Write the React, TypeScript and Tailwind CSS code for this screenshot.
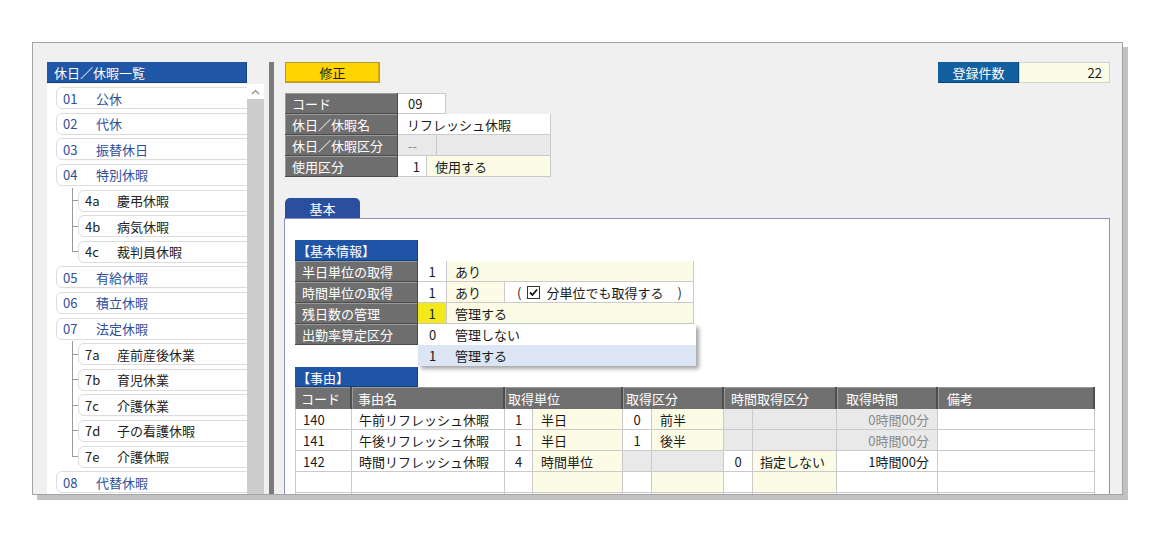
import React from "react";

type Sub = [string, string];
type Holiday = { code: string; name: string; children?: Sub[] };

const holidays: Holiday[] = [
  { code: "01", name: "公休" },
  { code: "02", name: "代休" },
  { code: "03", name: "振替休日" },
  {
    code: "04",
    name: "特別休暇",
    children: [
      ["4a", "慶弔休暇"],
      ["4b", "病気休暇"],
      ["4c", "裁判員休暇"],
    ],
  },
  { code: "05", name: "有給休暇" },
  { code: "06", name: "積立休暇" },
  {
    code: "07",
    name: "法定休暇",
    children: [
      ["7a", "産前産後休業"],
      ["7b", "育児休業"],
      ["7c", "介護休業"],
      ["7d", "子の看護休暇"],
      ["7e", "介護休暇"],
    ],
  },
  { code: "08", name: "代替休暇" },
];

type Reason = {
  code: string;
  name: string;
  unitNo: string;
  unit: string;
  kbnNo?: string;
  kbn?: string;
  timeNo?: string;
  time?: string;
  hours: string;
  auto: boolean;
};

const reasons: Reason[] = [
  { code: "140", name: "午前リフレッシュ休暇", unitNo: "1", unit: "半日", kbnNo: "0", kbn: "前半", hours: "0時間00分", auto: true },
  { code: "141", name: "午後リフレッシュ休暇", unitNo: "1", unit: "半日", kbnNo: "1", kbn: "後半", hours: "0時間00分", auto: true },
  { code: "142", name: "時間リフレッシュ休暇", unitNo: "4", unit: "時間単位", timeNo: "0", time: "指定しない", hours: "1時間00分", auto: false },
];

const label =
  "flex shrink-0 items-center bg-[#6e6e6e] text-white border-b border-r border-[#4c4c4c] shadow-[inset_1px_1px_0_#999999]";
const cell = "flex shrink-0 items-center border-b border-r border-[#cacaca]";
const yellow = "bg-[#fcfce6]";
const gray = "bg-[#e9e9e9]";

function TopItem({ code, name }: { code: string; name: string }) {
  return (
    <div className="flex h-[25.6px] shrink-0 items-center pl-[9px]">
      <div className="flex h-[22px] w-[230px] shrink-0 items-center rounded-[6px] border border-[#dcdcdc] bg-white pl-[6px] text-[#2d4f9c]">
        <span className="w-[33px] shrink-0">{code}</span>
        <span>{name}</span>
      </div>
    </div>
  );
}

function SubItem({ code, name, last }: { code: string; name: string; last: boolean }) {
  return (
    <div className="flex h-[25.6px] shrink-0 pl-[25px]">
      <div className="flex w-[6px] shrink-0 flex-col">
        <div className="flex-1 border-b border-l border-[#9a9a9a]" />
        <div className={last ? "flex-1" : "flex-1 border-l border-[#9a9a9a]"} />
      </div>
      <div className="flex shrink-0 items-center">
        <div className="flex h-[22px] w-[220px] shrink-0 items-center rounded-[6px] border border-[#dcdcdc] bg-white pl-[6px] text-[#222]">
          <span className="w-[32px] shrink-0">{code}</span>
          <span>{name}</span>
        </div>
      </div>
    </div>
  );
}

function LeftPanel() {
  return (
    <div className="flex w-[217px] shrink-0 flex-col">
      <div className="flex h-[21px] w-[200px] shrink-0 items-center bg-[#1f56a6] pl-[7px] text-white shadow-[inset_-1px_-1px_0_#123f80]">
        休日／休暇一覧
      </div>
      <div className="mt-px flex min-h-0 flex-1">
        <div className="flex w-[200px] shrink-0 flex-col overflow-hidden bg-white pt-[1.4px]">
          {holidays.map((h) => (
            <React.Fragment key={h.code}>
              <TopItem code={h.code} name={h.name} />
              {h.children?.map(([c, n], i) => (
                <SubItem key={c} code={c} name={n} last={i === h.children!.length - 1} />
              ))}
            </React.Fragment>
          ))}
        </div>
        <div className="flex w-[17px] shrink-0 flex-col">
          <div className="flex h-[15px] shrink-0 items-center justify-center bg-white">
            <svg width="9" height="6" viewBox="0 0 9 6">
              <path d="M1 5 L4.5 1.5 L8 5" fill="none" stroke="#8a8a8a" strokeWidth="1.2" />
            </svg>
          </div>
          <div className="flex-1 bg-[#cdcdcd]" />
        </div>
      </div>
    </div>
  );
}

function Checkbox() {
  return (
    <span className="mx-[6px] inline-flex h-[13px] w-[13px] shrink-0 items-center justify-center border border-[#333] bg-white">
      <svg width="11" height="11" viewBox="0 0 11 11">
        <path d="M2 5.5 L4.5 8 L9 2.5" fill="none" stroke="#111" strokeWidth="1.8" />
      </svg>
    </span>
  );
}

function BasicInfo() {
  return (
    <div className="flex shrink-0 flex-col">
      <div className="flex h-[21px] w-[123px] shrink-0 items-center bg-[#1f55a7] pl-[2px] text-white shadow-[inset_-1px_-1px_0_#123f80]">
        【基本情報】
      </div>
      <div className="flex h-[21px] shrink-0">
        <div className={`${label} w-[123px] pl-[7px]`}>半日単位の取得</div>
        <div className={`${cell} w-[29px] justify-center bg-white`}>1</div>
        <div className={`${cell} ${yellow} w-[247px] pl-[8px]`}>あり</div>
      </div>
      <div className="flex h-[21px] shrink-0">
        <div className={`${label} w-[123px] pl-[7px]`}>時間単位の取得</div>
        <div className={`${cell} w-[29px] justify-center bg-white`}>1</div>
        <div className={`${cell} ${yellow} w-[58px] pl-[8px]`}>あり</div>
        <div className={`${cell} w-[189px] bg-white pl-[12px]`}>
          <span>(</span>
          <Checkbox />
          <span>分単位でも取得する</span>
          <span className="ml-[14px]">)</span>
        </div>
      </div>
      <div className="relative flex h-[21px] shrink-0">
        <div className={`${label} w-[123px] pl-[7px]`}>残日数の管理</div>
        <div className={`${cell} w-[29px] justify-center bg-[#f3e81a]`}>1</div>
        <div className={`${cell} ${yellow} w-[247px] pl-[8px]`}>管理する</div>
        <div className="absolute left-[123px] top-[21px] z-10 flex w-[278px] flex-col bg-white shadow-[3px_3px_4px_rgba(0,0,0,0.35)]">
          <div className="flex h-[21px] items-center">
            <span className="w-[29px] text-center">0</span>
            <span className="pl-[8px]">管理しない</span>
          </div>
          <div className="flex h-[21px] items-center bg-[#dbe5f3]">
            <span className="w-[29px] text-center">1</span>
            <span className="pl-[8px]">管理する</span>
          </div>
        </div>
      </div>
      <div className="flex h-[21px] shrink-0">
        <div className={`${label} w-[123px] pl-[7px]`}>出勤率算定区分</div>
        <div className={`${cell} w-[29px] bg-white`} />
        <div className={`${cell} ${yellow} w-[247px]`} />
      </div>
    </div>
  );
}

const th =
  "flex shrink-0 items-center bg-[#707070] text-white border-r-2 border-[#4d4d4d] shadow-[inset_1px_1px_0_#9a9a9a]";

function ReasonTable() {
  const empty: Reason = { code: "", name: "", unitNo: "", unit: "", hours: "", auto: false };
  const rows = [...reasons, empty, empty];
  return (
    <div className="flex shrink-0 flex-col">
      <div className="flex h-[20px] w-[123px] shrink-0 items-center bg-[#1f55a7] pl-[2px] text-white shadow-[inset_-1px_-1px_0_#123f80]">
        【事由】
      </div>
      <div className="flex h-[22px] w-[800px] shrink-0">
        <div className={`${th} w-[57px] pl-[6px]`}>コード</div>
        <div className={`${th} w-[153px] pl-[6px]`}>事由名</div>
        <div className={`${th} w-[118px] pl-[3px]`}>取得単位</div>
        <div className={`${th} w-[101px] pl-[3px]`}>取得区分</div>
        <div className={`${th} w-[113px] pl-[7px]`}>時間取得区分</div>
        <div className={`${th} w-[101px] pl-[9px]`}>取得時間</div>
        <div className={`${th} w-[157px] pl-[9px]`}>備考</div>
      </div>
      {rows.map((r, i) => {
        const kbnOff = r.code !== "" && r.kbnNo === undefined;
        const timeOff = r.code !== "" && r.timeNo === undefined;
        return (
          <div key={i} className="flex h-[21px] w-[800px] shrink-0">
            <div className={`${cell} w-[57px] border-l bg-white pl-[7px]`}>{r.code}</div>
            <div className={`${cell} w-[153px] bg-white pl-[7px]`}>{r.name}</div>
            <div className={`${cell} w-[28px] justify-center bg-white`}>{r.unitNo}</div>
            <div className={`${cell} ${yellow} w-[90px] pl-[8px]`}>{r.unit}</div>
            <div className={`${cell} ${kbnOff ? gray : "bg-white"} w-[29px] justify-center`}>{r.kbnNo}</div>
            <div className={`${cell} ${kbnOff ? gray : yellow} w-[72px] pl-[8px]`}>{r.kbn}</div>
            <div className={`${cell} ${timeOff ? gray : "bg-white"} w-[29px] justify-center`}>{r.timeNo}</div>
            <div className={`${cell} ${timeOff ? gray : yellow} w-[84px] pl-[7px]`}>{r.time}</div>
            <div
              className={`${cell} ${r.auto ? "bg-[#e9e9e9] text-[#8a8a8a]" : "bg-white"} w-[101px] justify-end pr-[8px]`}
            >
              {r.hours}
            </div>
            <div className={`${cell} w-[157px] bg-white`} />
          </div>
        );
      })}
    </div>
  );
}

function HeaderForm() {
  return (
    <div className="mt-[10px] ml-px flex shrink-0 flex-col">
      <div className="flex h-[21px] shrink-0">
        <div className={`${label} w-[113px] pl-[7px]`}>コード</div>
        <div className={`${cell} w-[48px] border-t bg-white pl-[10px]`}>09</div>
      </div>
      <div className="flex h-[21px] shrink-0">
        <div className={`${label} w-[113px] pl-[7px]`}>休日／休暇名</div>
        <div className={`${cell} w-[153px] bg-white pl-[9px]`}>リフレッシュ休暇</div>
      </div>
      <div className="flex h-[21px] shrink-0">
        <div className={`${label} w-[113px] pl-[7px]`}>休日／休暇区分</div>
        <div className={`${cell} ${gray} w-[39px] pl-[10px] text-[#888]`}>--</div>
        <div className={`${cell} ${gray} w-[114px]`} />
      </div>
      <div className="flex h-[21px] shrink-0">
        <div className={`${label} w-[113px] pl-[7px]`}>使用区分</div>
        <div className={`${cell} w-[29px] justify-end bg-white pr-[6px]`}>1</div>
        <div className={`${cell} ${yellow} w-[124px] pl-[8px]`}>使用する</div>
      </div>
    </div>
  );
}

function RightPanel() {
  return (
    <div className="flex min-h-0 w-[826px] shrink-0 flex-col">
      <div className="flex h-[21px] shrink-0 items-center justify-between">
        <div className="ml-px flex h-[21px] w-[95px] items-center justify-center border border-[#b09a3a] bg-[#ffd400] shadow-[inset_-1px_-1px_0_#d4ad00]">
          修正
        </div>
        <div className="flex h-[21px]">
          <div className="flex w-[81px] items-center justify-center bg-[#12609f] text-white shadow-[inset_-1px_-1px_0_#0b4577]">
            登録件数
          </div>
          <div className="flex w-[91px] items-center justify-end border border-[#d2d2d2] bg-[#fcfce6] pr-[7px]">
            22
          </div>
        </div>
      </div>
      <HeaderForm />
      <div className="mt-[21px] ml-px flex h-[20px] w-[75px] shrink-0 items-center justify-center rounded-t-[5px] bg-[#2b4f9f] text-white">
        基本
      </div>
      <div className="flex min-h-0 flex-1 flex-col overflow-hidden border-x border-t border-[#8c8ec6] bg-white pl-[10px] pt-[21px]">
        <BasicInfo />
        <div className="mt-[22px] shrink-0">
          <ReasonTable />
        </div>
      </div>
    </div>
  );
}

export default function App() {
  return (
    <div className="h-[541px] w-[1156px] bg-white pl-[32px] pt-[42px] font-[family-name:'Noto_Sans_CJK_JP','Noto_Sans',sans-serif] text-[13px] leading-none text-[#1a1a1a]">
      <div className="flex h-[453px] w-[1091px] overflow-hidden border border-[#a4a4a4] bg-[#f0f0f0] pl-[14px] pt-[19px] shadow-[5px_5px_0_#c2c2c2]">
        <LeftPanel />
        <div className="ml-[5px] w-[5px] shrink-0 bg-[#7b7b7b]" />
        <div className="ml-[10px] flex min-h-0">
          <RightPanel />
        </div>
      </div>
    </div>
  );
}
